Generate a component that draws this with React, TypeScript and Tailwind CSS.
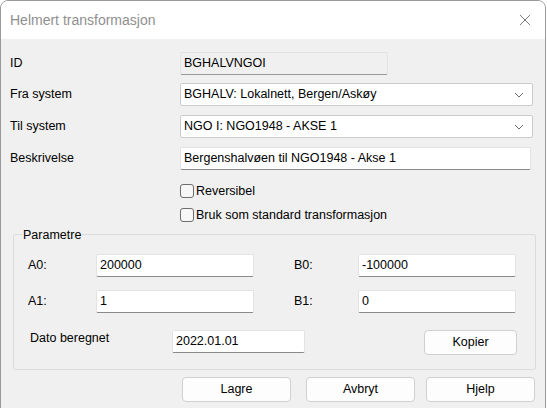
import React from 'react';

const font = { fontFamily: '"Liberation Sans", Arial, sans-serif' };

function TextField({ value, width, disabled }: { value: string; width: string; disabled?: boolean }) {
  return (
    <div
      className={`${width} h-[23px] flex items-center px-[3px] text-[12.5px] text-black border border-[#e3e3e3] border-b-[#8a8a8a] rounded-[2px] ${
        disabled ? 'bg-[#f0f0f0] border-[#d6d6d6] border-b-[#9a9a9a]' : 'bg-white'
      }`}
    >
      {value}
    </div>
  );
}

function Select({ value }: { value: string }) {
  return (
    <div className="w-[353px] h-[23px] flex items-center justify-between pl-[3px] pr-[8px] bg-white border border-[#cccccc] rounded-[2px] text-[12.5px] text-black">
      <span>{value}</span>
      <svg width="10" height="6" viewBox="0 0 10 6" fill="none">
        <path d="M1 1l4 4 4-4" stroke="#6b6b6b" strokeWidth="1" />
      </svg>
    </div>
  );
}

function Check({ label }: { label: string }) {
  return (
    <div className="flex items-center gap-[2px] pl-[170px] h-[14px]">
      <div className="w-[14px] h-[14px] rounded-[3px] border border-[#6e6e6e] bg-[#f7f7f7]" />
      <span className="text-[12.5px] text-black">{label}</span>
    </div>
  );
}

function Button({ label, width }: { label: string; width: string }) {
  return (
    <div className={`${width} h-[25px] flex items-center justify-center bg-[#fdfdfd] border border-[#d0d0d0] rounded-[4px] text-[12.5px] text-black`}>
      {label}
    </div>
  );
}

export default function App() {
  return (
    <div className="w-[547px] h-[408px] bg-white overflow-hidden" style={font}>
      <div className="w-[546px] h-[420px] rounded-t-[8px] border border-[#9a9a9a] bg-[#f0f0f0] overflow-hidden flex flex-col">
        {/* title bar */}
        <div className="h-[38px] bg-white flex items-center justify-between pl-[9px] pr-[14px] shrink-0">
          <span className="text-[14px] text-[#8f8f8f]">Helmert transformasjon</span>
          <svg width="12" height="12" viewBox="0 0 12 12">
            <path d="M1 1l10 10M11 1L1 11" stroke="#7a7a7a" strokeWidth="1" />
          </svg>
        </div>

        <div className="flex flex-col pl-[9px] pt-[13px] text-[12.5px] text-black">
          <div className="flex items-center">
            <span className="w-[170px]">ID</span>
            <TextField value="BGHALVNGOI" width="w-[208px]" disabled />
          </div>
          <div className="flex items-center mt-[8px]">
            <span className="w-[170px]">Fra system</span>
            <Select value="BGHALV: Lokalnett, Bergen/Askøy" />
          </div>
          <div className="flex items-center mt-[9px]">
            <span className="w-[170px]">Til system</span>
            <Select value="NGO I: NGO1948 - AKSE 1" />
          </div>
          <div className="flex items-center mt-[9px]">
            <span className="w-[170px]">Beskrivelse</span>
            <TextField value="Bergenshalvøen til NGO1948 - Akse 1" width="w-[351px]" />
          </div>
          <div className="mt-[14px]">
            <Check label="Reversibel" />
          </div>
          <div className="mt-[10px]">
            <Check label="Bruk som standard transformasjon" />
          </div>

          {/* Parametre group */}
          <div className="relative mt-[12px] ml-[3px] w-[523px] h-[136px] border border-[#dcdcdc] rounded-[2px] pl-[14px] pr-[18px] pt-[19px]">
            <span className="absolute -top-[9px] left-[8px] px-[1px] bg-[#f0f0f0] text-[12.5px]">Parametre</span>
            <div className="flex items-center">
              <span className="w-[68px]">A0:</span>
              <TextField value="200000" width="w-[158px]" />
              <span className="w-[64px] ml-[40px]">B0:</span>
              <TextField value="-100000" width="w-[158px]" />
            </div>
            <div className="flex items-center mt-[13px]">
              <span className="w-[68px]">A1:</span>
              <TextField value="1" width="w-[158px]" />
              <span className="w-[64px] ml-[40px]">B1:</span>
              <TextField value="0" width="w-[158px]" />
            </div>
            <div className="flex items-center mt-[15px]">
              <span className="w-[144px] pl-[2px] -mt-[6px]">Dato beregnet</span>
              <TextField value="2022.01.01" width="w-[133px]" />
              <div className="ml-auto mt-[2px]">
                <Button label="Kopier" width="w-[93px]" />
              </div>
            </div>
          </div>

          <div className="flex justify-end mt-[7px] pr-[10px]">
            <Button label="Lagre" width="w-[109px]" />
            <div className="ml-[15px]">
              <Button label="Avbryt" width="w-[109px]" />
            </div>
            <div className="ml-[11px]">
              <Button label="Hjelp" width="w-[109px]" />
            </div>
          </div>
        </div>
      </div>
    </div>
  );
}
